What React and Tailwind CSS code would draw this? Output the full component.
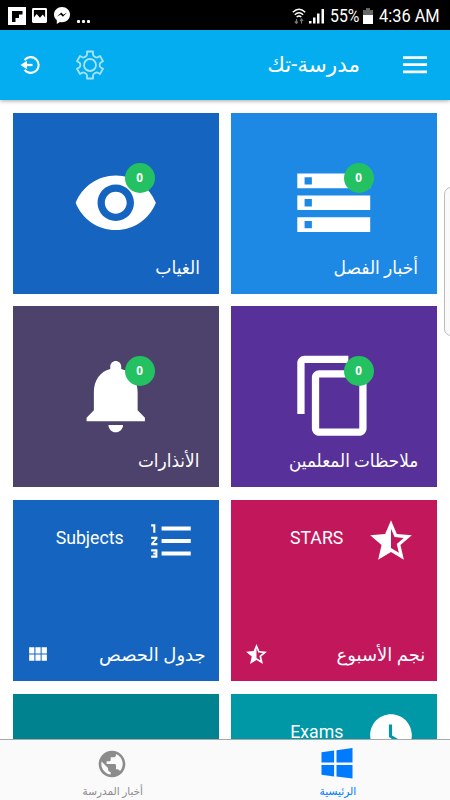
import React from 'react';

const icons = {
  eye: 'M12 4.5C7 4.5 2.73 7.61 1 12c1.73 4.39 6 7.5 11 7.5s9.27-3.11 11-7.5c-1.73-4.39-6-7.5-11-7.5zM12 17c-2.76 0-5-2.24-5-5s2.24-5 5-5 5 2.24 5 5-2.24 5-5 5zm0-8c-1.66 0-3 1.34-3 3s1.34 3 3 3 3-1.34 3-3-1.34-3-3-3z',
  storage: 'M2 20h20v-4H2v4zm2-3h2v2H4v-2zM2 4v4h20V4H2zm4 3H4V5h2v2zm-4 7h20v-4H2v4zm2-3h2v2H4v-2z',
  bell: 'M12 22c1.1 0 2-.9 2-2h-4c0 1.1.89 2 2 2zm6-6v-5c0-3.07-1.64-5.64-4.5-6.32V4c0-.83-.67-1.5-1.5-1.5s-1.5.67-1.5 1.5v.68C7.63 5.36 6 7.92 6 11v5l-2 2v1h16v-1l-2-2z',
  copy: 'M16 1H4c-1.1 0-2 .9-2 2v14h2V3h12V1zm3 4H8c-1.1 0-2 .9-2 2v14c0 1.1.9 2 2 2h11c1.1 0 2-.9 2-2V7c0-1.1-.9-2-2-2zm0 16H8V7h11v14z',
  list: 'M2 17h2v.5H3v1h1v.5H2v1h3v-4H2v1zm1-9h1V4H2v1h1v3zm-1 3h1.8L2 13.1v.9h3v-1H3.2L5 10.9V10H2v1zm5-6v2h14V5H7zm0 14h14v-2H7v2zm0-6h14v-2H7v2z',
  star: 'M22 9.24l-7.19-.62L12 2 9.19 8.63 2 9.24l5.46 4.73L5.82 21 12 17.27 18.18 21l-1.63-7.03L22 9.24zM12 15.4V6.1l1.71 4.04 4.38.38-3.32 2.88 1 4.28L12 15.4z',
  module: 'M4 11h5V5H4v6zm0 7h5v-6H4v6zm6 0h5v-6h-5v6zm6 0h5v-6h-5v6zm-6-7h5V5h-5v6zm6-6v6h5V5h-5z',
  clock: 'M12 2C6.5 2 2 6.5 2 12s4.500 10 10 10 10-4.500 10-10S17.500 2 12 2zm4.200 14.200L11 13V7h1.500v5.200l4.500 2.700-.8 1.300z',
  globe: 'M12 2C6.48 2 2 6.48 2 12s4.48 10 10 10 10-4.48 10-10S17.52 2 12 2zm-1 17.93c-3.95-.49-7-3.85-7-7.93 0-.62.08-1.21.21-1.79L9 15v1c0 1.1.9 2 2 2v1.93zm6.9-2.54c-.26-.81-1-1.39-1.9-1.39h-1v-3c0-.55-.45-1-1-1H8v-2h2c.55 0 1-.45 1-1V7h2c1.1 0 2-.9 2-2v-.41c2.93 1.19 5 4.06 5 7.41 0 2.08-.8 3.97-2.1 5.39z',
};

const Icon = ({ name, className }) => (
  <svg viewBox="0 0 24 24" fill="currentColor" className={className}>
    <path d={icons[name]} />
  </svg>
);

const counterCards = [
  { title: 'أخبار الفصل', icon: 'storage', color: 'bg-[#1e88e5]', count: 0, stretch: 'scale-x-[0.950]' },
  { title: 'الغياب', icon: 'eye', color: 'bg-[#1565c0]', count: 0, stretch: 'scale-x-[0.950]' },
  { title: 'ملاحظات المعلمين', icon: 'copy', color: 'bg-[#573199]', count: 0, stretch: 'scale-x-[0.935]' },
  { title: 'الأنذارات', icon: 'bell', color: 'bg-[#4c426c]', count: 0, stretch: 'scale-x-[0.940]' },
];

const infoCards = [
  { label: 'STARS', title: 'نجم الأسبوع', icon: 'star', small: 'star', color: 'bg-[#c2185b]', pad: 'pr-[12px] pl-[13px]' },
  { label: 'Subjects', title: 'جدول الحصص', icon: 'list', small: 'module', color: 'bg-[#1565c0]', pad: 'pr-[13px] pl-[12px]' },
];

const StatusBar = () => (
  <div dir="ltr" className="flex h-[30px] shrink-0 items-center justify-between bg-black pt-px pr-[10px] pl-[8px] text-white">
    <div className="flex items-center">
      <svg viewBox="0 0 18 18" className="h-[18px] w-[18px]">
        <path d="M0 0h18v18H0z" fill="#fff" />
        <path d="M4 4h10.500v3.500H11V11H7.500v4H4z" fill="#000" />
      </svg>
      <svg viewBox="0 0 16 16" className="ml-[6px] h-[15px] w-[15px]">
        <rect width="16" height="16" rx="1.500" fill="#fff" />
        <path d="M2 2h12v8l-2.500-3-3 3.500L5 6.500 2 10z" fill="#000" />
      </svg>
      <svg viewBox="0 0 16 17" className="ml-[7px] h-[17px] w-[16px]">
        <path d="M8 0C3.500 0 0 3.300 0 7.500c0 2.400 1.100 4.300 2.800 5.600V17l3.200-2c4.800 1.200 10-2 10-7.500C16 3.300 12.500 0 8 0z" fill="#fff" />
        <path d="M3 9.800l4.200-4.400 2.100 2.300 3.700-2.300-4.100 4.400-2.200-2.300z" fill="#000" />
      </svg>
      <div className="mt-[12px] ml-[7px] flex gap-[2px]">
        <i className="h-[3px] w-[3px] rounded-[1px] bg-white" />
        <i className="h-[3px] w-[3px] rounded-[1px] bg-white" />
        <i className="h-[3px] w-[3px] rounded-[1px] bg-white" />
      </div>
    </div>
    <div className="flex items-center">
      <svg viewBox="0 0 14 16" className="h-[16px] w-[14px]" fill="none" stroke="#fff" strokeWidth="1.500">
        <path d="M.8 4.200Q7-1.600 13.200 4.200M2.800 6.700Q7 2.800 11.200 6.700M4.700 9Q7 7 9.300 9" />
        <path d="M4.500 11v4.500M2.800 13.500l1.700 2 1.500-2M9.500 15.500V11M8 13l1.500-2 1.500 2" stroke="#777" strokeWidth="1.200" />
      </svg>
      <svg viewBox="0 0 16 16" className="ml-[3px] h-[16px] w-[16px]" fill="#fff">
        <path d="M0 13h2.500v2.500H0zM4 9.500h2.500v6H4zM8 5.500h2.500v10H8zM12.500 1H15v14.500h-2.500z" />
      </svg>
      <span className="ml-[5px] w-[30px] origin-left scale-x-[0.880] text-[18px] leading-none">55%</span>
      <svg viewBox="0 0 10 16" className="ml-[3px] h-[16px] w-[10px]">
        <path d="M0 2h3V0h4v2h3v14H0z" fill="#666" />
        <path d="M0 7h10v9H0z" fill="#fff" />
      </svg>
      <span className="ml-[6px] w-[61px] origin-left scale-x-[0.910] text-[18px] leading-none whitespace-nowrap">4:36 AM</span>
    </div>
  </div>
);

const Header = () => (
  <header className="relative z-10 flex h-[70px] shrink-0 items-center bg-[#03adf0] pr-[23px] pl-[20px] text-white shadow-[0_1px_4px_rgba(0,0,0,0.35)]">
    <svg viewBox="0 0 24 18" className="h-[18px] w-[24px]" fill="#fff">
      <path d="M0 .3h24V3H0zM0 7.300h24V10H0zM0 14.500h24v2.700H0z" />
    </svg>
    <h1 className="mr-[43px] text-[21.500px] leading-none">مدرسة-تك</h1>
    <div className="mr-auto flex items-center" dir="ltr">
      <svg viewBox="0 0 20 20" className="h-[20px] w-[20px]" fill="none" stroke="#fff" strokeWidth="2.100">
        <path d="M4.500 5.200A7.900 7.900 0 1 1 4.500 14.800" />
        <path d="M5 10h7.500" strokeWidth="2.300" />
        <path d="M.5 10L7 5.800v8.400z" fill="#fff" stroke="none" />
      </svg>
      <svg viewBox="0 0 28 30" className="ml-[36px] h-[30px] w-[28px] opacity-65" fill="none" stroke="#fff" strokeWidth="1.800" strokeLinejoin="round">
        <path d="M11 1.500h6v3.200q0 1 2 2.200 1.800 1 2.800.4l2.200-1.300 3 5.200-2.200 1.300q-1.200.8-1.200 2.500t1.200 2.500l2.200 1.300-3 5.200-2.200-1.300q-1-.6-2.800.4-2 1.200-2 2.200v3.200h-6v-3.200q0-1-2-2.200-1.800-1-2.800-.4L4 24l-3-5.200 2.200-1.300Q4.400 16.700 4.400 15T3.200 12.500L1 11.200 4 6l2.200 1.300q1 .6 2.800-.4 2-1.200 2-2.200z" />
        <circle cx="14" cy="15" r="6" />
      </svg>
    </div>
  </header>
);

const CounterCard = ({ title, icon, color, count, stretch }) => (
  <div className={`flex h-[181px] flex-col items-center pt-[46px] text-white ${color}`}>
    <div className="relative mr-[1px] h-[88px] w-[88px]">
      <Icon name={icon} className="h-[87.500px] w-[87.500px]" />
      <span className="absolute top-[4px] right-[4px] flex h-[30px] w-[30px] items-center justify-center rounded-full bg-[#23c162] font-['Noto_Sans'] text-[13px] font-bold">
        <span className="origin-center scale-x-[0.900]">{count}</span>
      </span>
    </div>
    <h2 className={`mt-[8px] mr-[19px] origin-right self-start text-[18px] leading-[26px] whitespace-nowrap ${stretch}`}>{title}</h2>
  </div>
);

const InfoCard = ({ label, title, icon, small, color, pad }) => (
  <div className={`flex h-[181px] flex-col justify-between pt-[16px] pb-[13px] text-white ${color} ${pad}`}>
    <div className="flex items-start pr-[9px]">
      <Icon name={icon} className="h-[50px] w-[50px]" />
      <span className="mt-[10px] mr-[23px] text-[17.700px] leading-[24px]">{label}</span>
    </div>
    {title && (
      <div className="flex items-center justify-between">
        <h2 className="text-[18px] leading-[26px] whitespace-nowrap">{title}</h2>
        <Icon name={small} className="h-[25px] w-[25px]" />
      </div>
    )}
  </div>
);

const App = () => {
  return (
    <div dir="rtl" className="relative flex h-[800px] w-[450px] flex-col overflow-hidden bg-white font-[Roboto,'DejaVu_Sans',sans-serif]">
      <StatusBar />
      <Header />
      <main className="min-h-0 flex-1 overflow-hidden px-[12.700px] pt-[12.500px]">
        <div className="grid grid-cols-2 gap-[12.700px]">
          {counterCards.map((card) => (
            <CounterCard key={card.title} {...card} />
          ))}
          {infoCards.map((card) => (
            <InfoCard key={card.title} {...card} />
          ))}
          <InfoCard label="Exams" icon="clock" color="bg-[#0097a7]" pad="pr-[12px] pl-[13px]" />
          <div className="h-[181px] bg-[#00838f]" />
        </div>
      </main>
      <nav className="z-10 grid h-[61px] shrink-0 grid-cols-2 border-t border-[#a8a8a8] bg-[#fafafa] text-[11px]">
        <div className="flex flex-col items-center pt-[8px] text-[#007aff]">
          <svg viewBox="0 0 32 32" className="mr-[1px] h-[31px] w-[32px]" fill="currentColor">
            <path d="M0 4.500l13-2V15H0zM15.500 2.200L32 0v15H15.500zM0 17.500h13v12l-13-2zM15.500 17.500H32v14l-16.500-2z" />
          </svg>
          <span className="mt-[5px] origin-center scale-x-[0.970] leading-[16px]">الرئيسية</span>
        </div>
        <div className="flex flex-col items-center pt-[8px] text-[#8c8c8c]">
          <Icon name="globe" className="mr-[1px] h-[32px] w-[32px]" />
          <span className="mt-[4px] origin-center scale-x-[0.950] leading-[16px]">أخبار المدرسة</span>
        </div>
      </nav>
      {/* edge panel handle */}
      <div className="absolute top-[187px] left-[444px] z-20 h-[149px] w-[14px] rounded-[7px] border border-[#bdbdbd] bg-[#fafafa]" />
    </div>
  );
};

export default App;
